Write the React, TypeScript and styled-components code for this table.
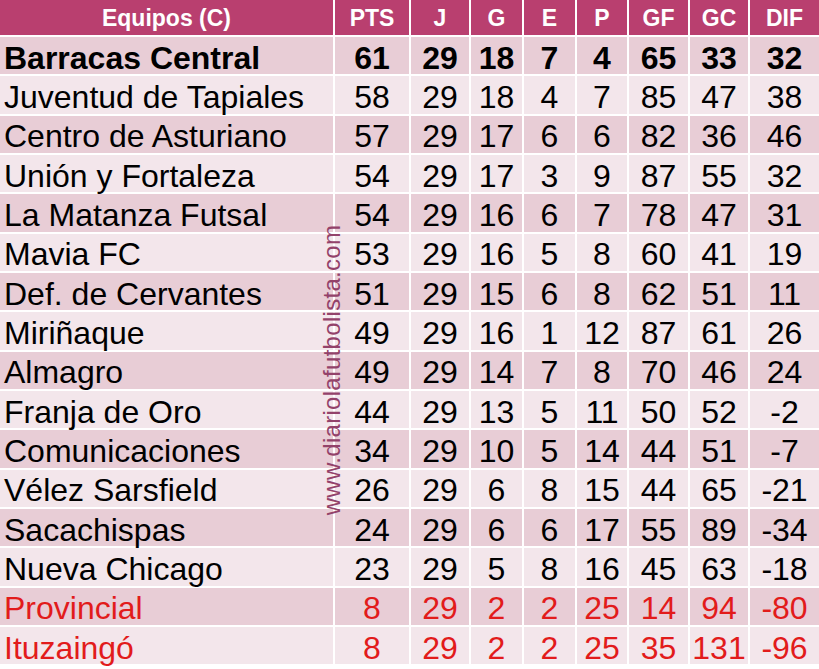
import { FunctionComponent } from 'react';
import styled, { createGlobalStyle } from 'styled-components';

type Team = {
    name: string;
    stats: number[];
    bold?: boolean;
    relegated?: boolean;
};

const headers = ['PTS', 'J', 'G', 'E', 'P', 'GF', 'GC', 'DIF'];

const teams: Team[] = [
    { name: 'Barracas Central', stats: [61, 29, 18, 7, 4, 65, 33, 32], bold: true },
    { name: 'Juventud de Tapiales', stats: [58, 29, 18, 4, 7, 85, 47, 38] },
    { name: 'Centro de Asturiano', stats: [57, 29, 17, 6, 6, 82, 36, 46] },
    { name: 'Unión y Fortaleza', stats: [54, 29, 17, 3, 9, 87, 55, 32] },
    { name: 'La Matanza Futsal', stats: [54, 29, 16, 6, 7, 78, 47, 31] },
    { name: 'Mavia FC', stats: [53, 29, 16, 5, 8, 60, 41, 19] },
    { name: 'Def. de Cervantes', stats: [51, 29, 15, 6, 8, 62, 51, 11] },
    { name: 'Miriñaque', stats: [49, 29, 16, 1, 12, 87, 61, 26] },
    { name: 'Almagro', stats: [49, 29, 14, 7, 8, 70, 46, 24] },
    { name: 'Franja de Oro', stats: [44, 29, 13, 5, 11, 50, 52, -2] },
    { name: 'Comunicaciones', stats: [34, 29, 10, 5, 14, 44, 51, -7] },
    { name: 'Vélez Sarsfield', stats: [26, 29, 6, 8, 15, 44, 65, -21] },
    { name: 'Sacachispas', stats: [24, 29, 6, 6, 17, 55, 89, -34] },
    { name: 'Nueva Chicago', stats: [23, 29, 5, 8, 16, 45, 63, -18] },
    { name: 'Provincial', stats: [8, 29, 2, 2, 25, 14, 94, -80], relegated: true },
    { name: 'Ituzaingó', stats: [8, 29, 2, 2, 25, 35, 131, -96], relegated: true },
];

const GlobalStyle = createGlobalStyle`
    html, body {
        margin: 0;
        padding: 0;
        background: #ffffff;
    }
    body {
        font-family: 'Liberation Sans', Arial, sans-serif;
    }
`;

const App: FunctionComponent = () => (
    <>
        <GlobalStyle />
        <Wrapper>
            <Table>
                <HeaderCell>Equipos (C)</HeaderCell>
                {headers.map((h) => (
                    <HeaderCell key={h}>{h}</HeaderCell>
                ))}
                {teams.map((team, i) => (
                    <Row key={team.name} $dark={i % 2 === 0} $bold={!!team.bold} $red={!!team.relegated}>
                        <NameCell>{team.name}</NameCell>
                        {team.stats.map((s, j) => (
                            <NumCell key={j}>{s}</NumCell>
                        ))}
                    </Row>
                ))}
            </Table>
            <Watermark>www.diariolafutbolista.com</Watermark>
        </Wrapper>
    </>
);

export default App;

const Wrapper = styled.div`
    position: relative;
    width: 819px;
    height: 669px;
    overflow: hidden;
`;

const Table = styled.div`
    display: grid;
    grid-template-columns: 335px 76px 60px 53px 53px 52px 61px 60px 69px;
    grid-template-rows: 37px repeat(16, 39.33px);
`;

const HeaderCell = styled.div`
    box-sizing: border-box;
    display: flex;
    align-items: center;
    justify-content: center;
    background: #b93f6f;
    color: #ffffff;
    font-weight: bold;
    font-size: 23px;
    border-right: 2px solid #ffffff;
    border-bottom: 2px solid #ffffff;
    padding-top: 2px;

    &:nth-child(9) {
        border-right: none;
    }
`;

const Row = styled.div<{ $dark: boolean; $bold: boolean; $red: boolean }>`
    display: contents;

    & > div {
        background: ${({ $dark }) => ($dark ? '#e8cdd6' : '#f3e6eb')};
        color: ${({ $red }) => ($red ? '#e21b1b' : '#000000')};
        font-weight: ${({ $bold }) => ($bold ? 'bold' : 'normal')};
    }

    & > div:last-child {
        border-right: none;
    }
`;

const BaseCell = styled.div`
    box-sizing: border-box;
    display: flex;
    align-items: center;
    font-size: 32px;
    line-height: 1;
    border-right: 2px solid #ffffff;
    border-bottom: 2px solid #ffffff;
    white-space: nowrap;
    padding-top: 4px;
`;

const NameCell = styled(BaseCell)`
    padding-left: 4px;
`;

const NumCell = styled(BaseCell)`
    justify-content: center;
`;

const Watermark = styled.div`
    position: absolute;
    left: 332px;
    top: 370px;
    transform: translate(-50%, -50%) rotate(-90deg);
    color: #93426a;
    font-size: 24px;
    white-space: nowrap;
    letter-spacing: 0.3px;
`;
